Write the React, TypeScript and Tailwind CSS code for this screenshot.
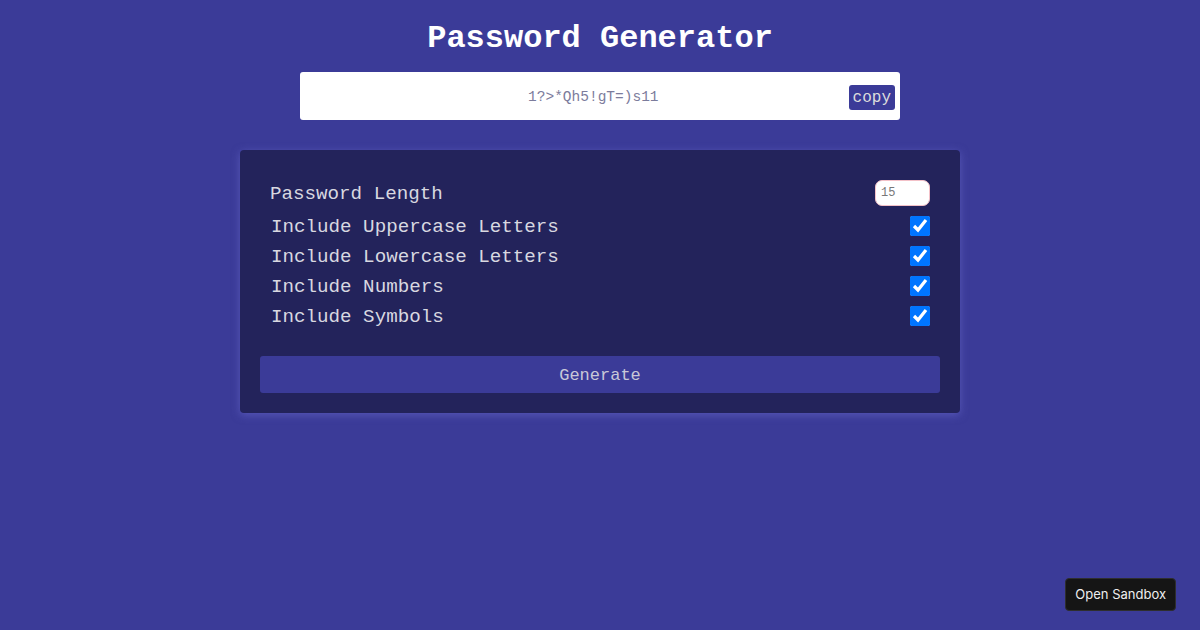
import { useState } from "react";

const options = [
  "Include Uppercase Letters",
  "Include Lowercase Letters",
  "Include Numbers",
  "Include Symbols",
];

export default function App() {
  const [checked, setChecked] = useState([true, true, true, true]);

  return (
    <div className="min-h-screen bg-[#3b3b98] flex flex-col items-center font-['Liberation_Mono','Courier_New',monospace]">
      <h1 className="mt-[20px] text-[32px] leading-[38px] font-bold text-white">
        Password Generator
      </h1>

      <div className="mt-[14px] w-[600px] h-[48px] bg-white rounded-[3px] flex items-center">
        <span className="flex-1 text-center pl-[38px] pt-[3px] text-[14.5px] text-[#7c7c9c]">
          1?&gt;*Qh5!gT=)s11
        </span>
        <button className="mr-[5px] mt-[2px] h-[25px] px-[4px] bg-[#3b3b98] rounded-[3px] text-[16px] leading-[27px] text-[#ddd]">
          copy
        </button>
      </div>

      <div className="mt-[30px] w-[720px] bg-[#23235b] rounded-[4px] shadow-[0_2px_8px_rgba(110,110,210,0.55)] px-[20px] pt-[30px] pb-[20px]">
        <div className="flex items-center justify-between px-[10px] h-[26px]">
          <span className="text-[19.2px] text-[#d8d8e0] pt-[2px]">Password Length</span>
          <input
            type="number"
            defaultValue={15}
            className="w-[55px] h-[26px] rounded-[7px] bg-white border border-[#f3c1c8] px-[5px] text-[12px] text-[#777] outline-none"
          />
        </div>
        <div className="mt-[10px] flex flex-col gap-[10px]">
          {options.map((label, i) => (
            <label
              key={label}
              className="flex items-center justify-between px-[10px] h-[20px]"
            >
              <span className="text-[19.2px] text-[#d8d8e0] pl-[1px] pt-[2px]">{label}</span>
              <input
                type="checkbox"
                checked={checked[i]}
                onChange={() =>
                  setChecked((c) => c.map((v, j) => (j === i ? !v : v)))
                }
                className="m-0 w-[20px] h-[20px] accent-[#0075ff]"
              />
            </label>
          ))}
        </div>
        <button className="mt-[30px] w-full h-[37px] pt-[3px] bg-[#3b3b98] rounded-[3px] text-[17px] text-[#c8c8d8]">
          Generate
        </button>
      </div>

      <button className="fixed right-[24px] bottom-[19px] h-[33px] px-[9px] bg-[#151515] border border-[#2e2e2e] rounded-[4px] text-[13px] text-[#eee] font-['Inter',sans-serif]">
        Open Sandbox
      </button>
    </div>
  );
}
